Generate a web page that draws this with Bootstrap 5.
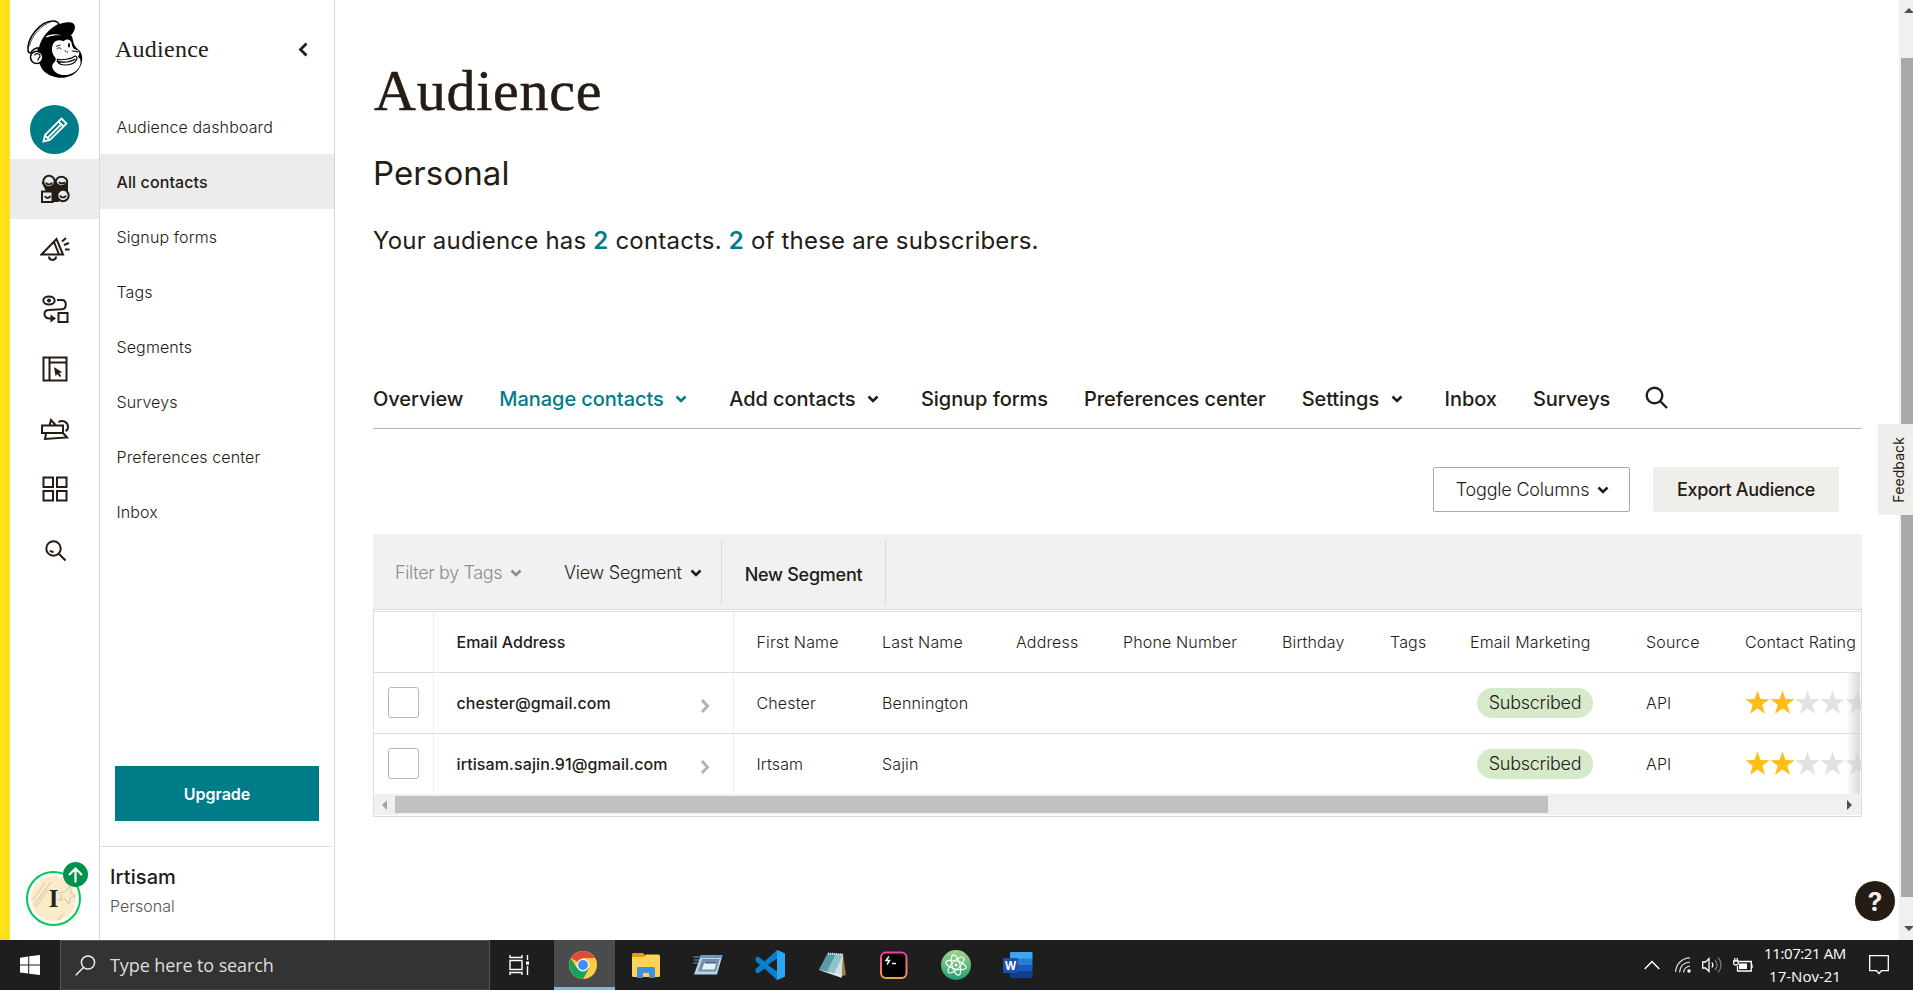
<!DOCTYPE html>
<html lang="en">
<head>
<meta charset="utf-8">
<meta name="viewport" content="width=device-width, initial-scale=1">
<title>Audience | Mailchimp</title>
<link href="https://cdn.jsdelivr.net/npm/bootstrap@5.3.0/dist/css/bootstrap.min.css" rel="stylesheet">
<style>
:root{--ink:#241c15;--teal:#007c89;--line:#dddddd}
body{font-family:Inter,"Liberation Sans",sans-serif;font-size:16px;color:var(--ink);height:990px;overflow:hidden;background:#fff}
svg{display:block;flex:none}
a{color:inherit;text-decoration:none}
.serif{font-family:"Liberation Serif",serif}
.workspace{height:940px}
/* icon rail */
.rail{width:100px;border-left:10px solid #ffe01b;border-right:1px solid #d8d8d8;padding-top:19px}
.rail-logo{height:86px;padding-left:16px}
.rail-create{width:49px;height:49px;background:var(--teal);margin:0 0 5px 20px}
.rail-item{height:60px}
.rail-item.on{background:#ececec}
.avatar{width:55px;height:55px;border:2px solid #00c853;padding:3px;margin:0 0 14px 16px}
.avatar-face{background:#faecc8;font-size:25px;font-weight:700;color:#222}
.avatar-badge{left:35px;top:-11px;width:25px;height:25px;background:#00914d}
/* section menu */
.menu{width:235px;border-right:1px solid #d8d8d8}
.menu-title{height:99px;padding:0 26px 1px 15px}
.menu-title span{font-size:24px;letter-spacing:.25px}
.menu-link{height:55px;padding:0 0 0 16.5px;font-weight:350;letter-spacing:.12px}
.menu-link.on{background:#ececec;font-weight:500;letter-spacing:.1px}
.upgrade{margin:0 15px 25px;height:55px;background:var(--teal);border-radius:0;color:#fff;font-weight:600;padding-top:3px;line-height:50px}
.account{margin-right:3px;border-top:1px solid var(--line);height:94px;padding:17px 0 0 10px}
.account-name{font-size:20px;font-weight:500;line-height:26px;letter-spacing:.1px}
.account-org{line-height:32px;color:#5a544f;letter-spacing:0;font-weight:350}
/* content */
.content{padding:61px 37px 0 38px;min-width:0}
h1{font-size:58px;line-height:60px;letter-spacing:.75px;-webkit-text-stroke:.5px var(--ink);margin:0 0 32px 1px}
h2{font-size:33px;line-height:40px;font-weight:400;margin-bottom:28px;letter-spacing:.1px}
.summary{font-size:24px;line-height:40px;letter-spacing:.2px;font-weight:380;margin-bottom:107px}
.summary b{color:var(--teal);font-weight:600}
.tabs{height:61px;border-bottom:1px solid #b5b5b5;font-size:20px;font-weight:500;gap:36px;letter-spacing:-.06px;padding-top:1px}
.tabs .on{color:var(--teal)}
.tabs>svg{margin:-3px 0 0 -1px}
.caret-wide{margin:0 6px 0 11.5px}
.tools{margin:38px 23px 22px 0;gap:23px;font-size:18px}
.tools .btn{height:45px;font-size:18px;color:var(--ink);padding:0;border-radius:2px;line-height:43px}
.btn-toggle{width:197px;border:1px solid #aaa;letter-spacing:-.2px;font-weight:350}
.tools .btn-toggle{padding-left:2px}
.tools .btn-export{width:186px;background:#efeeea;font-weight:500;letter-spacing:-.3px;border:0;line-height:45px}
.filterbar{height:75px;background:#f1f1f1;font-size:18px;padding:6px 0 4px 22px;font-weight:350}
.filterbar .muted{color:#8f8c88;width:169px;letter-spacing:-.35px}
.seg-view{width:157px;letter-spacing:-.27px}
.seg-new{width:165px;border:solid #dadada;border-width:0 1px;font-weight:500;letter-spacing:-.25px;padding-top:4px}
.grid-frame{height:208px;border:1px solid var(--line);padding-top:1px}
.grid-body{border-top:1px solid var(--line);height:183px}
.contacts{table-layout:fixed;width:1488px;--bs-table-color:var(--ink);--bs-table-bg:transparent}
.contacts>:not(caption)>*>*{height:61px;padding:0 0 0 22px;border-bottom:1px solid var(--line);vertical-align:middle;font-weight:350;letter-spacing:.15px;white-space:nowrap;line-height:24px;color:var(--ink)}
.contacts>thead>tr>th{height:60px}
.contacts>tbody>tr:last-child>*{height:62px;border-bottom:0;padding-bottom:1px}
.contacts>*>tr>:nth-child(1){padding-left:14px;border-right:1px solid #eee}
.contacts>*>tr>:nth-child(2){padding-left:23px;border-right:1px solid #eee;font-weight:500}
.contacts>thead>tr>:nth-child(2){letter-spacing:0}
.contacts>*>tr>:nth-child(3){padding-left:23px}
.contacts tbody .mail{letter-spacing:.1px}
.form-check-input.pick{width:31px;height:31px;border:1.5px solid #bbb7b5;border-radius:3px;margin:0;display:block}
.pill{background:#d6e9cb;border-radius:15px;width:116px;height:30px;line-height:29px;margin-left:7px;font-size:18px;letter-spacing:-.25px}
.row-chev{margin:6px 23px 0 0}
.fade-edge{right:1px;top:61px;width:14px;height:121px;background:linear-gradient(90deg,rgba(255,255,255,0),rgba(205,205,205,.75))}
.hscroll{height:21px;background:#f0f0f0;padding:2px 8px 2px 7px}
.hscroll-thumb{width:1153px;height:17px;background:#c1c1c1;margin-left:8px}
.vscroll{width:14px;background:#f0f0f0}
.vscroll-thumb{margin:44px 0 0 2px;height:839px;background:#a8a8a8}
.feedback{right:0;top:424px;width:35px;height:91px;background:#efeeea;font-size:14px;letter-spacing:.1px}
.feedback span{writing-mode:vertical-rl;transform:rotate(180deg);padding-right:0;margin-left:6px}
.help{left:1855px;top:881px;width:40px;height:40px;background:var(--ink);color:#efeeea;font-size:26px;font-weight:700}
/* desktop taskbar */
.taskbar{height:50px;background:#1e1e1e;color:#fff}
.start{width:60px}
.search{width:430px;background:#333;border:1px solid #575757;border-bottom-color:#444;font-family:"Open Sans",sans-serif;font-size:18px;color:#ddd;letter-spacing:-.1px;padding-left:14px;gap:14px}
.task{width:62px;height:50px;flex:none}
.task.on{background:#4b4b4b;border-bottom:3px solid #76b9ed;padding-top:3px;width:61px;margin-left:2px}
.clock{font-family:"Open Sans",sans-serif;font-size:15px;line-height:23px;width:94px;letter-spacing:-.4px}
.clock span{letter-spacing:0}
.tray-wifi{margin-left:15px}
.tray-sound{margin-left:11px}
.tray-power{margin-left:10px}
.tray-note{margin-left:17px}
</style>
</head>
<body class="d-flex flex-column">
<svg width="0" height="0" class="position-absolute">
<defs>
<symbol id="down" viewBox="0 0 12 8"><path d="M1.500 1.500 6 6l4.500-4.500" fill="none" stroke="currentColor" stroke-width="2.600"/></symbol>
<symbol id="right" viewBox="0 0 10 14"><path d="M2 1l5.500 6L2 13" fill="none" stroke="#b5b2b0" stroke-width="3"/></symbol>
<symbol id="star" viewBox="0 0 25 25"><path d="M12.500.5l3 8.600 9 .2-7.200 5.500 2.700 8.900-7.500-5.300L5 23.700l2.700-8.900L.5 9.300l9-.2z"/></symbol>
<symbol id="stars" viewBox="0 0 125 25"><g fill="#ffbe15"><use href="#star" width="25" height="25"/><use href="#star" x="25" width="25" height="25"/></g><g fill="#e2e2e2"><use href="#star" x="50" width="25" height="25"/><use href="#star" x="75" width="25" height="25"/><use href="#star" x="100" width="25" height="25"/></g></symbol>
</defs>
</svg>

<div class="workspace d-flex position-relative">
  <nav class="rail d-flex flex-column flex-shrink-0">
    <a class="rail-logo" href="#" aria-label="Home">
      <svg width="57" height="60" viewBox="78 56 171 180">
        <path d="M120 112C106 150 112 190 132 213c28 27 82 27 104-6 12-18 13-34 8-47 -4-12-16-14-22-28l-6-24-26-18-52-2z"/>
        <path d="M84 152C80 112 122 62 159 62c11 0 16 4 18 10-26 14-50 36-58 70-12 0-22 6-27 16-5 0-7-2-8-6z" fill="#fff" stroke="#000" stroke-width="4.500"/>
        <path d="M88 138c8-34 36-64 66-74" fill="none" stroke="#000" stroke-width="2"/>
        <path d="M152 94c10-20 40-32 64-27 12 4 11 20 2 32-6 10-14 12-22 9-12-6-28-5-40 0z"/>
        <path d="M136 110c12-9 28-11 48-5-14-1-28 0-42 6z" fill="#fff"/>
        <path d="M159 132c4-12 20-16 32-9 8-10 22-6 24 6 2 12 5 18 18 21 9 6 3 15 1 21 12 5 9 24-1 36-14 18-46 22-62 12-14-9-18-22-11-30 8-7 10-13 3-21-8-10-9-24-4-36z" fill="#fff"/>
        <path d="M172 177c14 3 40 0 54-10 6 2 6 8 3 12-5 10-20 15-36 15-14 0-21-5-21-17zM170 183c18 4 40 3 56-7M215 152c8 0 16 1 20 4" fill="none" stroke="#000" stroke-width="3.500"/>
        <path d="M170 146c4-5 10-5 15 1M168 138l14-4" fill="none" stroke="#000" stroke-width="2.500"/>
        <ellipse cx="207" cy="135" rx="3" ry="7"/><circle cx="196" cy="152" r="2"/><circle cx="202" cy="155" r="2"/>
        <circle cx="110" cy="171" r="18.500" fill="#fff" stroke="#000" stroke-width="4.500"/>
        <path d="M103 165c6-9 18-5 17 3-1 5-7 5-6 13" fill="none" stroke="#000" stroke-width="3.500"/>
      </svg>
    </a>
    <a class="rail-create rounded-circle d-flex align-items-center justify-content-center" href="#" aria-label="Create">
      <svg width="28" height="28" viewBox="0 0 28 28" fill="none" stroke="#fff" stroke-width="1.800"><path d="M2.500 25.500l1.500-6.500L20.500 2.500l5 5L9 24zM17.500 5.500l5 5M7 21.500L19.500 9M4 19.500l4.500 4.500"/></svg>
    </a>
    <a class="rail-item on d-flex align-items-center justify-content-center" href="#" aria-label="Audience">
      <svg width="30" height="30" viewBox="0 0 30 30" fill="#ececec" stroke="#241c15" stroke-width="2"><path d="M3 9h24v9l-9 9h-6z" fill="#241c15"/><circle cx="9" cy="7.500" r="5.700"/><ellipse cx="21.500" cy="7.500" rx="5.700" ry="4.700"/><circle cx="23" cy="21.500" r="5.700"/><path d="M2 17.500h10.500V28H2z"/><path d="M6 8.500c1 2.500 5 2.500 6 0M19 8c1 2 5 2 6 0M5 22c1 2.500 4 2.500 5.500 0M20 21.500c1 2.500 5 2.500 6 0" fill="none"/></svg>
    </a>
    <a class="rail-item d-flex align-items-center justify-content-center" href="#" aria-label="Campaigns">
      <svg width="30" height="26" viewBox="0 0 30 26" fill="none" stroke="#241c15" stroke-width="2"><path d="M1.500 18.500L16.500 3l6.500 15.500zM14 6l5 12.500M9 20.500c0 4.500 7 4.500 7 0M22 5.500l4-3.500M24 9l5-2M25 13.500h4.500"/></svg>
    </a>
    <a class="rail-item d-flex align-items-center justify-content-center" href="#" aria-label="Automations">
      <svg width="28" height="30" viewBox="0 0 28 30" fill="none" stroke="#241c15" stroke-width="2"><ellipse cx="8" cy="6.500" rx="5.700" ry="4"/><circle cx="8" cy="6.500" r="1"/><path d="M16 6h5c5 0 5 9 0 9.200L8 16c-6 0-6 8 0 8.500h3M17.500 19h9v9h-9z"/><path d="M9.500 20.500l5.500 4-5.500 4z" fill="#241c15" stroke="none"/></svg>
    </a>
    <a class="rail-item d-flex align-items-center justify-content-center" href="#" aria-label="Website">
      <svg width="26" height="26" viewBox="0 0 26 26" fill="none" stroke="#241c15" stroke-width="2"><path d="M1.500 1.500h23v23h-23zM7.500 1.500v23M7.500 6.500h17"/><path d="M12 11l1.500 9 2-2 2.200 3 1.500-1-2-3 3-.7z" fill="#241c15" stroke="none"/></svg>
    </a>
    <a class="rail-item d-flex align-items-center justify-content-center" href="#" aria-label="Content studio">
      <svg width="30" height="24" viewBox="0 0 30 24" fill="none" stroke="#241c15" stroke-width="2"><path d="M2 8.500h21v7.500H2zM9.500 8.500l1.500-5.500 5 5.500M6 16.500L5 22l22-1.500-4-4.500M18.500 5c5-2.500 9.500.5 9.500 5 0 2-1 3.500-2.500 4"/></svg>
    </a>
    <a class="rail-item d-flex align-items-center justify-content-center" href="#" aria-label="Integrations">
      <svg width="26" height="26" viewBox="0 0 26 26" fill="none" stroke="#241c15" stroke-width="2"><path d="M1.500 1.500h9.500v9.500H1.500zM15 1.500h9.500v9.500H15zM1.500 15h9.500v9.500H1.500zM15 15h9.500v9.500H15z"/></svg>
    </a>
    <a class="rail-item d-flex align-items-center justify-content-center pt-1" href="#" aria-label="Search">
      <svg width="22" height="22" viewBox="0 0 22 22" fill="none" stroke="#241c15" stroke-width="2"><circle cx="9.500" cy="8.500" r="7.200"/><path d="M14.500 13.500l7 7M6 10.500c1 1.500 2.500 1.300 3.500.8"/></svg>
    </a>
    <div class="avatar rounded-circle position-relative mt-auto">
      <div class="avatar-face serif rounded-circle w-100 h-100 d-flex align-items-center justify-content-center overflow-hidden position-relative">
        <svg class="position-absolute top-0 start-0" width="45" height="45" viewBox="0 0 45 45" fill="none" stroke="#ddd0b0" stroke-width="1.300"><path d="M2 24L14 6M3 29L20 6M5 31L17 14M28 17l7-2 4-6 1 8 5 3-6 2-1 6-4-5-6 1 3-4zM27 45l5-7"/></svg>
        <span class="position-relative">I</span>
      </div>
      <div class="avatar-badge position-absolute rounded-circle d-flex align-items-center justify-content-center"><svg width="17" height="17" viewBox="0 0 17 17" fill="none" stroke="#fff" stroke-width="2.200"><path d="M8.500 16.500v-14M2 9l6.500-6.500L15 9"/></svg></div>
    </div>
  </nav>

  <aside class="menu d-flex flex-column flex-shrink-0">
    <div class="menu-title d-flex align-items-center justify-content-between"><span class="serif">Audience</span><svg width="10" height="15" viewBox="0 0 10 15"><path d="M8.500 1.500l-6 6 6 6" fill="none" stroke="#241c15" stroke-width="2.800"/></svg></div>
    <div class="d-flex flex-column">
      <a class="menu-link d-flex align-items-center" href="#">Audience dashboard</a>
      <a class="menu-link on d-flex align-items-center" href="#">All contacts</a>
      <a class="menu-link d-flex align-items-center" href="#">Signup forms</a>
      <a class="menu-link d-flex align-items-center" href="#">Tags</a>
      <a class="menu-link d-flex align-items-center" href="#">Segments</a>
      <a class="menu-link d-flex align-items-center" href="#">Surveys</a>
      <a class="menu-link d-flex align-items-center" href="#">Preferences center</a>
      <a class="menu-link d-flex align-items-center" href="#">Inbox</a>
    </div>
    <a class="upgrade text-center mt-auto" href="#">Upgrade</a>
    <div class="account"><div class="account-name">Irtisam</div><div class="account-org">Personal</div></div>
  </aside>

  <main class="content flex-grow-1">
    <h1 class="serif fw-normal">Audience</h1>
    <h2>Personal</h2>
    <p class="summary">Your audience has <b>2</b> contacts. <b>2</b> of these are subscribers.</p>
    <nav class="tabs d-flex align-items-center">
      <a href="#">Overview</a>
      <a class="on d-flex align-items-center" href="#">Manage contacts<svg class="caret-wide" width="12" height="8"><use href="#down"/></svg></a>
      <a class="d-flex align-items-center" href="#">Add contacts<svg class="caret-wide" width="12" height="8"><use href="#down"/></svg></a>
      <a href="#">Signup forms</a>
      <a href="#">Preferences center</a>
      <a class="d-flex align-items-center" href="#">Settings<svg class="caret-wide" width="12" height="8"><use href="#down"/></svg></a>
      <a href="#">Inbox</a>
      <a href="#">Surveys</a>
      <svg width="23" height="23" viewBox="0 0 23 23" fill="none" stroke="#241c15" stroke-width="2.400"><circle cx="9.500" cy="9.500" r="7.800"/><path d="M15 15l7 7"/></svg>
    </nav>
    <div class="tools d-flex justify-content-end">
      <a class="btn btn-toggle d-flex align-items-center justify-content-center" href="#">Toggle Columns<svg class="ms-2" width="12" height="8"><use href="#down"/></svg></a>
      <a class="btn btn-export" href="#">Export Audience</a>
    </div>
    <div class="filterbar d-flex">
      <div class="muted d-flex align-items-center">Filter by Tags<svg class="ms-2" width="12" height="8"><use href="#down"/></svg></div>
      <div class="seg-view d-flex align-items-center">View Segment<svg class="ms-2" width="12" height="8"><use href="#down"/></svg></div>
      <div class="seg-new d-flex align-items-center justify-content-center">New Segment</div>
    </div>
    <div class="grid-frame">
      <div class="grid-body position-relative overflow-hidden">
        <table class="table contacts mb-0">
          <colgroup><col style="width:59px"><col style="width:300px"><col style="width:127px"><col style="width:134px"><col style="width:107px"><col style="width:159px"><col style="width:108px"><col style="width:80px"><col style="width:176px"><col style="width:99px"><col style="width:139px"></colgroup>
          <thead><tr><th></th><th>Email Address</th><th>First Name</th><th>Last Name</th><th>Address</th><th>Phone Number</th><th>Birthday</th><th>Tags</th><th>Email Marketing</th><th>Source</th><th>Contact Rating</th></tr></thead>
          <tbody>
            <tr><td><input class="form-check-input pick" type="checkbox" aria-label="Select"></td><td><div class="d-flex justify-content-between align-items-center"><span class="mail">chester@gmail.com</span><svg class="row-chev" width="10" height="14"><use href="#right"/></svg></div></td><td>Chester</td><td>Bennington</td><td></td><td></td><td></td><td></td><td><div class="pill text-center">Subscribed</div></td><td>API</td><td><svg width="125" height="25"><use href="#stars"/></svg></td></tr>
            <tr><td><input class="form-check-input pick" type="checkbox" aria-label="Select"></td><td><div class="d-flex justify-content-between align-items-center"><span class="mail">irtisam.sajin.91@gmail.com</span><svg class="row-chev" width="10" height="14"><use href="#right"/></svg></div></td><td>Irtsam</td><td>Sajin</td><td></td><td></td><td></td><td></td><td><div class="pill text-center">Subscribed</div></td><td>API</td><td><svg width="125" height="25"><use href="#stars"/></svg></td></tr>
          </tbody>
        </table>
        <div class="fade-edge position-absolute"></div>
      </div>
      <div class="hscroll d-flex align-items-center">
        <svg width="6" height="10"><path d="M6 0v10L1 5z" fill="#a3a3a3"/></svg>
        <div class="hscroll-thumb"></div>
        <svg class="ms-auto" width="6" height="10"><path d="M0 0v10l5-5z" fill="#505050"/></svg>
      </div>
    </div>
  </main>

  <div class="vscroll d-flex flex-column flex-shrink-0 overflow-hidden">
    <svg width="16" height="6" class="mt-2 ms-1"><path d="M1 5h10L6 0z" fill="#505050"/></svg>
    <div class="vscroll-thumb"></div>
    <svg width="16" height="6" class="mt-auto ms-1 mb-2"><path d="M1 0h10L6 5z" fill="#505050"/></svg>
  </div>
  <a class="feedback position-absolute d-flex align-items-center justify-content-center" href="#"><span>Feedback</span></a>
  <a class="help position-absolute rounded-circle d-flex align-items-center justify-content-center" href="#">?</a>
</div>

<footer class="taskbar d-flex">
  <div class="start d-flex align-items-center justify-content-center"><svg width="20" height="20" viewBox="0 0 20 20" fill="#fff"><path d="M0 2.700l8.200-1.200V9.500H0zM9.200 1.300L20 0v9.500H9.200zM0 10.500h8.200v8L0 17.400zM9.200 10.500H20V20L9.200 18.700z"/></svg></div>
  <div class="search d-flex align-items-center"><svg width="21" height="21" viewBox="0 0 21 21" fill="none" stroke="#eee" stroke-width="1.500"><circle cx="13" cy="7.500" r="6.600"/><path d="M8.500 12.500L.7 20.300"/></svg><span>Type here to search</span></div>
  <div class="task d-flex align-items-center justify-content-center pe-1"><svg width="21" height="20" viewBox="0 0 21 20" fill="none" stroke="#fff" stroke-width="1.400"><path d="M1 0v2.500h12V0M1 5.500h12v9H1zM1 20v-2.500h12V20M18.500 0v5M18.500 11v9"/><path d="M17 6.500h3v3.200h-3z" fill="#fff" stroke="none"/></svg></div>
  <div class="task on d-flex align-items-center justify-content-center pe-1"><svg width="28" height="28" viewBox="0 0 28 28"><circle cx="14" cy="14" r="14" fill="#ffcd40"/><path d="M14 14L1.900 7A14 14 0 0 1 26.100 7H14z" fill="#dd4b3e"/><path d="M1.900 7A14 14 0 0 0 14 28l6.100-10.500L14 14 8 17.500z" fill="#1aa15f"/><circle cx="14" cy="14" r="6.400" fill="#f4f4f4"/><circle cx="14" cy="14" r="5" fill="#4b8bf5"/></svg></div>
  <div class="task d-flex align-items-center justify-content-center"><svg width="28" height="28" viewBox="0 0 28 28"><path d="M0 3.500A1.500 1.500 0 0 1 1.500 2H11l2 2v4H0z" fill="#e09e05"/><path d="M0 6h12l2-2.500h12.500A1.500 1.500 0 0 1 28 5v19.500a1.500 1.500 0 0 1-1.500 1.500h-25A1.500 1.500 0 0 1 0 24.500z" fill="#ffd35a"/><path d="M5 27V17.500A1.500 1.500 0 0 1 6.500 16h15a1.500 1.500 0 0 1 1.500 1.500V27h-6v-5h-6v5z" fill="#3c93da"/></svg></div>
  <div class="task d-flex align-items-center justify-content-center"><svg width="30" height="22" viewBox="0 0 30 22"><path d="M0 3h8M1 6h6M0 9h5" stroke="#6b9cc4"/><path d="M8 1h21.500L24 20.500H1z" fill="#b4d5ee"/><path d="M8 1h21.500l-.8 3H7z" fill="#5d9bd1"/><path d="M9 5h17.500L23 17.500H5z" fill="#7e8e99"/><path d="M11.500 8h12l-2 7.500H9z" fill="#e6f1fa"/><path d="M12 8h11.500l-.4 1.500H11.500z" fill="#2d6dad"/></svg></div>
  <div class="task d-flex align-items-center justify-content-center"><svg width="30" height="30" viewBox="0 0 30 30"><path d="M22 0l8 3.500v23L22 30 9.500 18.500 3 23.500.5 22V19L5 15 .5 11V8L3 6.500l6.500 5z" fill="#0a7fcb"/><path d="M22 0l8 3.500v23L22 30z" fill="#29a7f3"/><path d="M22 8.500v13L13 15z" fill="#1e1e1e"/></svg></div>
  <div class="task d-flex align-items-center justify-content-center"><svg width="28" height="28" viewBox="0 0 28 28"><path d="M25 3l3 21-4 1z" fill="#a57b35"/><path d="M10 2l15 1-3 19.500L1 19z" fill="#8ec3cb"/><path d="M10 2l8 .5L9 20.500 1 19z" fill="#5b9aa5"/><path d="M25 3l-1 23-8-3z" fill="#cfe0e3"/><path d="M1 19l21 3.500 2 4.500z" fill="#dbe6e8"/><path d="M10 2.500l16 1" stroke="#ddd" stroke-width="2" stroke-dasharray="1 1"/></svg></div>
  <div class="task d-flex align-items-center justify-content-center"><svg width="28" height="28" viewBox="0 0 28 28"><defs><linearGradient id="hy" x2="0" y2="1"><stop stop-color="#f13fa6"/><stop offset="1" stop-color="#f5a13e"/></linearGradient></defs><rect x="1" y="1.500" width="25.500" height="25.500" rx="5" stroke="url(#hy)" stroke-width="2" fill="#000"/><path d="M9 5.500l-3 4h3.500L7 13.500M12 12.500h4" stroke="#fff" stroke-width="1.500" fill="none"/></svg></div>
  <div class="task d-flex align-items-center justify-content-center"><svg width="30" height="30" viewBox="0 0 30 30"><defs><linearGradient id="at" x2="0" y2="1"><stop stop-color="#a5d68c"/><stop offset="1" stop-color="#1ba272"/></linearGradient></defs><circle cx="15" cy="15" r="15" fill="url(#at)"/><g fill="none" stroke="#fff" stroke-width="1.200"><ellipse cx="15" cy="15" rx="10.500" ry="4" transform="rotate(15 15 15)"/><ellipse cx="15" cy="15" rx="10.500" ry="4" transform="rotate(75 15 15)"/><ellipse cx="15" cy="15" rx="10.500" ry="4" transform="rotate(135 15 15)"/></g><circle cx="15" cy="15" r="1.500" fill="#fff"/></svg></div>
  <div class="task d-flex align-items-center justify-content-center"><svg width="30" height="28" viewBox="0 0 30 28"><path d="M7 2a1 1 0 0 1 1-1h20.500a1 1 0 0 1 1 1v6H7z" fill="#41a5ee"/><path d="M7 7.500h22.500V14H7z" fill="#2b7cd3"/><path d="M7 14h22.500v6.500H7z" fill="#185abd"/><path d="M7 20.500h22.500V26a1 1 0 0 1-1 1H8a1 1 0 0 1-1-1z" fill="#103f91"/><rect y="7" width="15" height="15" rx="1" fill="#1a52b0"/><text x="7.500" y="19" text-anchor="middle" font-family="Open Sans" font-size="11.500" font-weight="700" fill="#fff">W</text></svg></div>
  <div class="ms-auto d-flex align-items-center pe-4">
    <svg width="16" height="10" viewBox="0 0 16 10" fill="none" stroke="#fff" stroke-width="1.500"><path d="M.7 9L8 1.500 15.300 9"/></svg>
    <svg class="tray-wifi" width="16" height="16" viewBox="0 0 16 16" fill="none" stroke="#ddd" stroke-width="1.200"><path d="M.6 15C1 7 7 1 15 .8M4.500 15.500C5 9.500 9 5.500 15 5M8.500 15.500c.5-3.500 3-6 6.500-6.500"/><circle cx="14" cy="14" r="1.700" fill="#fff" stroke="none"/></svg>
    <svg class="tray-sound" width="21" height="18" viewBox="0 0 21 18" fill="none" stroke="#fff" stroke-width="1.300"><path d="M.7 6h2.800L7 2.500v13L3.500 12H.7zM10 6.500c1 1.500 1 3.500 0 5"/><path d="M13 4c2.500 3 2.500 7 0 10M16 1.500c4 4.500 4 10.500 0 15" stroke="#777"/></svg>
    <svg class="tray-power" width="21" height="15" viewBox="0 0 21 15" fill="none" stroke="#fff" stroke-width="1.300"><path d="M6 3.500h12.300v9.500H4.500V8M19 6.500v3.500M.7 3h4.500v2.500c0 2-4.500 2-4.500 0zM1.800 0v3M4.200 0v3"/><path d="M6 5.500h8v5.500H6z" fill="#fff" stroke="none"/></svg>
    <div class="clock text-center ms-1">11:07:21 AM<br><span>17-Nov-21</span></div>
    <svg class="tray-note" width="20" height="20" viewBox="0 0 20 20" fill="none" stroke="#fff" stroke-width="1.300"><path d="M.7.700h18.600v15H12.500L10 18.500 7.500 15.700H.7z"/></svg>
  </div>
</footer>
<script src="https://cdn.jsdelivr.net/npm/bootstrap@5.3.0/dist/js/bootstrap.bundle.min.js"></script>
</body>
</html>
